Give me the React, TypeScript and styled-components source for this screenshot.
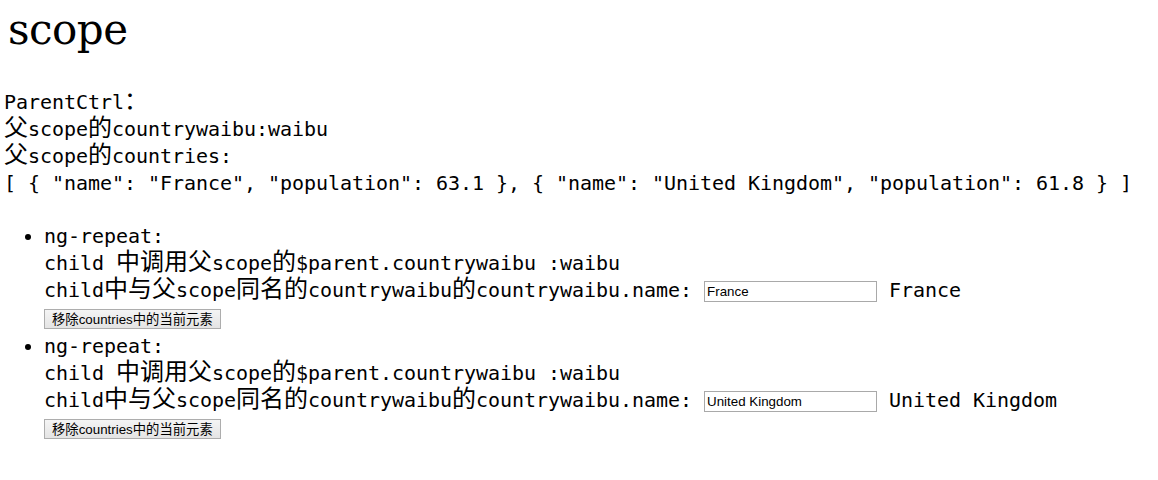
import React, { useState } from "react";
import styled, { createGlobalStyle } from "styled-components";

const GlobalStyle = createGlobalStyle`
  html, body { margin: 0; padding: 0; background: #ffffff; }
  body { color: #000000; }
`;

const Page = styled.div`
  padding: 5px 4px 0;
  font-family: "DejaVu Sans Mono", "Noto Sans CJK SC", monospace;
  font-size: 20px;
  letter-spacing: -0.04px;
  color: #000;
`;

const Title = styled.h1`
  margin: 0;
  padding-left: 4px;
  font-family: "DejaVu Serif", serif;
  font-weight: normal;
  font-size: 42px;
  letter-spacing: -0.5px;
  line-height: 49px;
  height: 49px;
`;

const Block = styled.div`
  margin-top: 35px;
`;

const Line = styled.div`
  height: 27px;
  line-height: 27px;
  white-space: nowrap;
`;

const Han = styled.span<{ $big?: boolean }>`
  font-family: "Noto Sans CJK SC", sans-serif;
  font-size: ${(p) => (p.$big ? "24px" : "1em")};
  line-height: ${(p) => (p.$big ? "19px" : "inherit")};
  letter-spacing: 0;
`;

const List = styled.ul`
  margin: 26px 0 0;
  padding-left: 40px;
  list-style: disc;
`;

const Item = styled.li``;

const Field = styled.input`
  box-sizing: border-box;
  width: 173px;
  height: 21px;
  margin: 4px 0 0;
  padding: 1px 2px;
  border: 1px solid #a9a9a9;
  border-radius: 0;
  outline: none;
  vertical-align: top;
  font-family: "Liberation Sans", Arial, sans-serif;
  font-size: 13.33px;
  letter-spacing: 0;
  color: #000;
  background: #fff;
`;

const ButtonRow = styled.div`
  box-sizing: border-box;
  height: 29px;
  padding-top: 5px;
`;

const RemoveButton = styled.button`
  box-sizing: border-box;
  height: 20px;
  margin: 0;
  padding: 0 7px;
  border: 1px solid #adadad;
  border-radius: 0;
  background: linear-gradient(#f4f4f4, #e4e4e4);
  color: #000;
  font-family: "Liberation Sans", "Noto Sans CJK SC", sans-serif;
  font-size: 13.33px;
  letter-spacing: 0;
  line-height: 18px;
  white-space: nowrap;
  vertical-align: top;
`;

const cjkRe = /([\u3000-\u303f\u3400-\u9fff\uff00-\uffef]+)/;

const Mixed: React.FC<{ text: string; big?: boolean }> = ({ text, big = true }) => (
  <>
    {text.split(cjkRe).map((part, i) =>
      part === "" ? null : cjkRe.test(part) ? (
        <Han key={i} $big={big}>
          {part}
        </Han>
      ) : (
        <React.Fragment key={i}>{part}</React.Fragment>
      )
    )}
  </>
);

type Country = { name: string; population: number };

const initial: Country[] = [
  { name: "France", population: 63.1 },
  { name: "United Kingdom", population: 61.8 },
];

const toJson = (list: Country[]) =>
  "[ " +
  list.map((c) => `{ "name": "${c.name}", "population": ${c.population} }`).join(", ") +
  " ]";

export default function App() {
  const [countries, setCountries] = useState<Country[]>(initial);

  return (
    <>
      <GlobalStyle />
      <Page>
        <Title>scope</Title>
        <Block>
          <Line>
            <Mixed text="ParentCtrl：" />
          </Line>
          <Line>
            <Mixed text="父scope的countrywaibu:waibu" />
          </Line>
          <Line>
            <Mixed text="父scope的countries:" />
          </Line>
          <Line>{toJson(countries)}</Line>
        </Block>
        <List>
          {countries.map((c, idx) => (
            <Item key={c.name}>
              <Line>ng-repeat:</Line>
              <Line>
                <Mixed text="child 中调用父scope的$parent.countrywaibu :waibu" />
              </Line>
              <Line>
                <Mixed text="child中与父scope同名的countrywaibu的countrywaibu.name: " />
                <Field defaultValue={c.name} />
                {" "}
                {c.name}
              </Line>
              <ButtonRow>
                <RemoveButton onClick={() => setCountries(countries.filter((_, i) => i !== idx))}>
                  <Mixed text="移除countries中的当前元素" big={false} />
                </RemoveButton>
              </ButtonRow>
            </Item>
          ))}
        </List>
      </Page>
    </>
  );
}
